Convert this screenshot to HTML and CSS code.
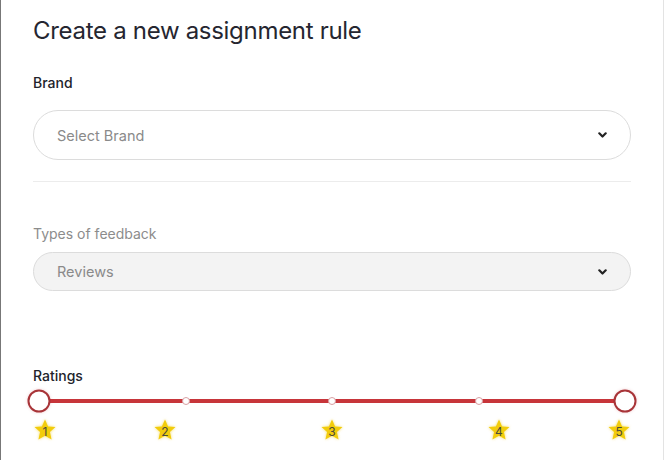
FILE: index.html
```html
<!DOCTYPE html>
<html>
<head>
<meta charset="utf-8">
<link rel="stylesheet" href="styles.css">
</head>
<body>
<div class="modal">
  <h1 class="title">Create a new assignment rule</h1>
  <div class="field">
    <label class="label">Brand</label>
    <div class="select select-lg">
      <span class="placeholder">Select Brand</span>
      <svg class="chev" width="9" height="6" viewBox="0 0 9 6"><path d="M1.3 1.3 L4.5 4.5 L7.7 1.3" fill="none" stroke="#222" stroke-width="2.2" stroke-linecap="round" stroke-linejoin="round"/></svg>
    </div>
  </div>
  <hr class="divider">
  <div class="field field-muted">
    <label class="label label-muted">Types of feedback</label>
    <div class="select select-sm disabled">
      <span class="placeholder">Reviews</span>
      <svg class="chev" width="9" height="6" viewBox="0 0 9 6"><path d="M1.3 1.3 L4.5 4.5 L7.7 1.3" fill="none" stroke="#222" stroke-width="2.2" stroke-linecap="round" stroke-linejoin="round"/></svg>
    </div>
  </div>
  <div class="ratings">
    <label class="label">Ratings</label>
    <div class="slider">
      <div class="track"></div>
      <span class="dot" style="left:25%"></span>
      <span class="dot" style="left:50%"></span>
      <span class="dot" style="left:75%"></span>
      <span class="handle" style="left:0%"></span>
      <span class="handle" style="left:100%"></span>
      <span class="star" style="left:1%"><svg viewBox="0 0 24 24"><path d="M12 1.5l3.1 6.9 7.4.7-5.6 5 1.7 7.4L12 17.7l-6.6 3.8 1.7-7.4-5.6-5 7.4-.7z"/></svg><b>1</b></span>
      <span class="star" style="left:21.5%"><svg viewBox="0 0 24 24"><path d="M12 1.5l3.1 6.9 7.4.7-5.6 5 1.7 7.4L12 17.7l-6.6 3.8 1.7-7.4-5.6-5 7.4-.7z"/></svg><b>2</b></span>
      <span class="star" style="left:50%"><svg viewBox="0 0 24 24"><path d="M12 1.5l3.1 6.9 7.4.7-5.6 5 1.7 7.4L12 17.7l-6.6 3.8 1.7-7.4-5.6-5 7.4-.7z"/></svg><b>3</b></span>
      <span class="star" style="left:78.5%"><svg viewBox="0 0 24 24"><path d="M12 1.5l3.1 6.9 7.4.7-5.6 5 1.7 7.4L12 17.7l-6.6 3.8 1.7-7.4-5.6-5 7.4-.7z"/></svg><b>4</b></span>
      <span class="star" style="left:99%"><svg viewBox="0 0 24 24"><path d="M12 1.5l3.1 6.9 7.4.7-5.6 5 1.7 7.4L12 17.7l-6.6 3.8 1.7-7.4-5.6-5 7.4-.7z"/></svg><b>5</b></span>
    </div>
  </div>
</div>
</body>
</html>
```
FILE: styles.css
```css
html, body {
  margin: 0;
  padding: 0;
  background: #fff;
}
body {
  font-family: "Inter", "Lato", sans-serif;
  color: #22232b;
}
.modal {
  width: 664px;
  height: 460px;
  border-left: 1px solid #777;
  border-right: 1px solid #e3e3e3;
  padding: 0 32px;
  box-sizing: border-box;
  overflow: hidden;
}
.title {
  margin: 0;
  padding-top: 15px;
  font-size: 24px;
  font-weight: 400;
  line-height: 32px;
  letter-spacing: -0.3px;
  color: #252630;
}
.field {
  margin-top: 27px;
}
.label {
  display: block;
  font-size: 14px;
  line-height: 18px;
  color: #22232b;
  font-weight: 500;
}
.label-muted {
  color: #8c8c8c;
  font-weight: 400;
}
.select {
  display: flex;
  align-items: center;
  justify-content: space-between;
  border: 1px solid #dcdcdc;
  border-radius: 26px;
  padding: 0 23px 0 23px;
  margin-top: 18px;
  box-sizing: border-box;
}
.select-lg {
  height: 50px;
}
.select-sm {
  height: 39px;
  margin-top: 9px;
}
.disabled {
  background: #f3f3f3;
}
.placeholder {
  font-size: 14.5px;
  color: #8a8a8a;
}
.chev {
  display: block;
}
.divider {
  border: 0;
  height: 1px;
  background: #ececec;
  margin: 21px 0 0;
}
.field-muted {
  margin-top: 43px;
}
.ratings {
  margin-top: 76px;
}
.slider {
  position: relative;
  margin: 6px 0 0 6px;
  width: 586px;
  height: 60px;
}
.track {
  position: absolute;
  left: 0;
  right: 0;
  top: 8px;
  height: 4px;
  background: #c7353a;
}
.dot {
  position: absolute;
  top: 10px;
  width: 8px;
  height: 8px;
  border: 1.5px solid #d8a0a4;
  background: #fff;
  border-radius: 50%;
  box-sizing: border-box;
  transform: translate(-50%, -50%);
}
.handle {
  position: absolute;
  top: 10px;
  width: 23px;
  height: 23px;
  border: 2px solid #a83438;
  background: #fff;
  border-radius: 50%;
  box-sizing: border-box;
  transform: translate(-50%, -50%);
  box-shadow: 0 0 3px rgba(200, 60, 70, 0.25);
}
.star {
  position: absolute;
  top: 27px;
  width: 24px;
  height: 24px;
  transform: translateX(-50%);
  display: flex;
  align-items: center;
  justify-content: center;
}
.star svg {
  position: absolute;
  inset: 0;
  width: 24px;
  height: 24px;
  fill: #f2cc0c;
  filter: drop-shadow(0 0 1.5px rgba(240, 210, 60, 0.8));
}
.star b {
  position: relative;
  font-weight: 400;
  font-size: 12px;
  color: #4a4a3a;
  margin-top: 3px;
}
```
